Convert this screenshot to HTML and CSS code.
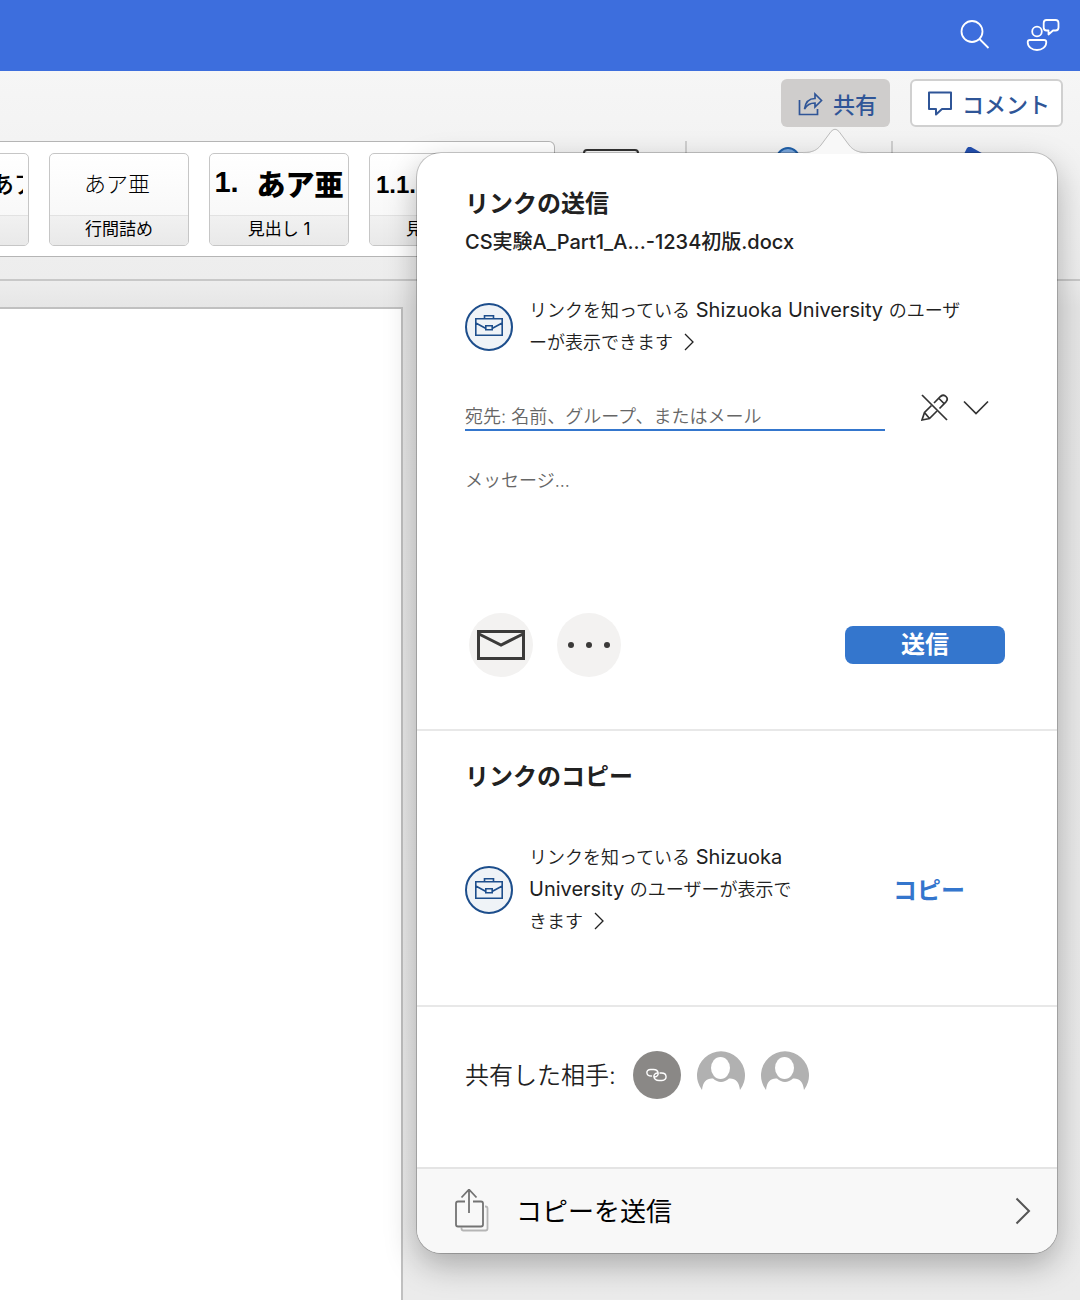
FILE: index.html
```html
<!DOCTYPE html>
<html lang="ja">
<head>
<meta charset="utf-8">
<meta name="viewport" content="width=device-width, initial-scale=1">
<title>リンクの送信</title>
<link rel="stylesheet" href="styles.css">
</head>
<body>
<svg class="symbols" aria-hidden="true">
  <symbol id="briefcase" viewBox="0 0 48 48">
    <circle cx="24" cy="24" r="23" fill="#eff3f7" stroke="#1d4e8c" stroke-width="2"/>
    <path d="M10.800 15.800H37.200V32.200H10.800ZM19.500 15.800V12.700H28.500V15.800M10.800 20L20.500 25.200M37.200 20L27.500 25.200M20.800 22.800H27.200V26.800H20.800Z" fill="none" stroke="#1d4e8c" stroke-width="1.600"/>
  </symbol>
  <symbol id="person" viewBox="0 0 48 48">
    <path d="M5 39A24 24 0 1 1 43 39C42 30 38 27 32 27.500C27 32 21 32 16 27.500C10 27 6 30 5 39Z" fill="#b1b1b1"/>
    <ellipse cx="23.500" cy="17" rx="9.500" ry="11" fill="#fff"/>
  </symbol>
  <symbol id="angle" viewBox="0 0 10 18">
    <path d="M1 1L9 9L1 17" fill="none" stroke="currentColor" stroke-width="1.300"/>
  </symbol>
</svg>

<header class="titlebar">
  <button class="icon-button" type="button" aria-label="検索">
    <svg width="32" height="32" viewBox="0 0 32 32"><g fill="none" stroke="#fff" stroke-width="1.800"><circle cx="13" cy="13.500" r="10.500"/><path d="M20.500 21L29.500 30"/></g></svg>
  </button>
  <button class="icon-button" type="button" aria-label="フィードバック">
    <svg width="34" height="34" viewBox="0 0 34 34"><g fill="none" stroke="#fff" stroke-width="1.800" stroke-linejoin="round"><circle cx="11" cy="14.500" r="4.800"/><path d="M4 23H18Q20.300 23 20.300 25.200C20.300 30 16 33 11 33S1.700 30 1.700 25.200Q1.700 23 4 23Z"/><path d="M20.500 3H29.500Q32.500 3 32.500 6V10.500Q32.500 13.500 29.500 13.500H27L22.500 17.500V13.500H20.500Q17.700 13.500 17.700 10.500V6Q17.700 3 20.500 3Z"/></g></svg>
  </button>
</header>

<section class="ribbon">
  <div class="actions">
    <button class="action pressed" type="button">
      <svg width="25" height="25" viewBox="0 0 25 25"><path d="M1.500 9V23.500H19.500V18M6.500 18C7.500 11 11 7.500 17 7.500V3L23.500 9.500L17 16V12C12 12 9 13.500 6.500 18Z" fill="none" stroke="#2f5597" stroke-width="1.700"/></svg>
      共有
    </button>
    <button class="action outlined" type="button">
      <svg width="25" height="25" viewBox="0 0 25 25"><path d="M2 1.500H24V18H15L9 23.500V18H2Z" fill="none" stroke="#2f5597" stroke-width="2" stroke-linejoin="round"/></svg>
      コメント
    </button>
  </div>
  <div class="groups">
    <div class="gallery">
      <button class="style" type="button"><span class="preview cut">あア</span><span class="name"></span></button>
      <button class="style" type="button"><span class="preview body-style">あア亜</span><span class="name">行間詰め</span></button>
      <button class="style" type="button"><span class="preview heading1"><span>1.</span><span>あア亜</span></span><span class="name">見出し 1</span></button>
      <button class="style" type="button"><span class="preview heading2">1.1. あ</span><span class="name">見出し 2</span></button>
    </div>
    <div class="tools">
      <div class="tool"><svg width="56" height="56" viewBox="0 0 56 56"><rect x="1" y="1" width="54" height="54" rx="3" fill="#f7f7f7" stroke="#333" stroke-width="2"/></svg></div>
      <div class="tool"><svg width="28" height="28" viewBox="0 0 28 28"><circle cx="14" cy="12" r="11" fill="#7ba7dc" stroke="#1f5fa8" stroke-width="2"/></svg></div>
      <div class="tool"><svg width="28" height="28" viewBox="0 0 28 28"><path d="M12 0L28 9L16 28L0 17L8 1Q10-1 12 0Z" fill="#2450b0"/></svg></div>
    </div>
  </div>
</section>

<main class="canvas">
  <div class="paper"></div>
</main>

<div class="popover" role="dialog" aria-labelledby="send-title">
  <svg class="arrow" width="64" height="26" viewBox="0 0 64 26"><path d="M0 25C10 25 14 22 18 17L28 3.500Q32-1 36 3.500L46 17C50 22 54 25 64 25V26H0Z" fill="#f8f8f8"/><path d="M0 24.500C10 24.500 14 22 18 17L28 3.500Q32-1 36 3.500L46 17C50 22 54 24.500 64 24.500" fill="none" stroke="#bbb"/></svg>

  <section class="send">
    <h2 id="send-title">リンクの送信</h2>
    <p class="file">CS実験A_Part1_A...-1234初版.docx</p>
    <a class="scope" href="#permissions">
      <svg class="badge"><use href="#briefcase"/></svg>
      <span class="scope-text">リンクを知っている<span class="latin"> Shizuoka University </span>のユーザーが表示できます <svg class="angle"><use href="#angle"/></svg></span>
    </a>
    <div class="recipient">
      <input type="text" aria-label="宛先" placeholder="宛先: 名前、グループ、またはメール">
      <button class="permission" type="button" aria-label="編集不可">
        <svg width="28" height="28" viewBox="0 0 28 28"><g fill="none" stroke="#333" stroke-width="1.700"><path d="M1 1L26 26"/><path d="M13 9L19.500 2.500Q22.500 0 25 2.500Q27.500 5 25 7.800L18.500 14.500M10.500 11.500L3.500 18.500L1 26L8.500 24.500L16 17M18 4.500L23 9.500M3.500 18.500L8.500 24.500"/></g></svg>
        <svg width="26" height="16" viewBox="0 0 26 16"><path d="M1 1.500L13 13.500L25 1.500" fill="none" stroke="#333" stroke-width="1.700"/></svg>
      </button>
    </div>
    <textarea aria-label="メッセージ" placeholder="メッセージ..."></textarea>
    <div class="send-row">
      <button class="round" type="button" aria-label="メール"><svg width="48" height="30" viewBox="0 0 48 30"><path d="M1.500 1.500H46.500V28.500H1.500ZM2 4L24 15L46 4" fill="none" stroke="#3b3a39" stroke-width="3"/></svg></button>
      <button class="round" type="button" aria-label="その他"><svg width="42" height="6" viewBox="0 0 42 6" fill="#3b3a39"><circle cx="3" cy="3" r="3"/><circle cx="21" cy="3" r="3"/><circle cx="39" cy="3" r="3"/></svg></button>
      <button class="submit" type="button">送信</button>
    </div>
  </section>

  <section class="copy">
    <h2>リンクのコピー</h2>
    <div class="copy-row">
      <a class="scope" href="#permissions">
        <svg class="badge"><use href="#briefcase"/></svg>
        <span class="scope-text">リンクを知っている<span class="latin"> Shizuoka University </span>のユーザーが表示できます <svg class="angle"><use href="#angle"/></svg></span>
      </a>
      <button class="copy-button" type="button">コピー</button>
    </div>
  </section>

  <section class="shared">
    <span>共有した相手:</span>
    <svg width="48" height="48" viewBox="0 0 48 48"><circle cx="24" cy="24" r="24" fill="#8a8886"/><g fill="none" stroke="#fff" stroke-width="1.400" stroke-linecap="round"><path d="M18.500 25C12.500 25 12.500 18.500 17.500 18.500H20.500C26 18.500 27 25.500 21.500 26"/><path d="M27 22H28.500C34.500 22 34.500 29.500 29 29.500H26C20 29.500 19 22.500 24.500 22"/></g></svg>
    <svg width="48" height="48"><use href="#person"/></svg>
    <svg width="48" height="48"><use href="#person"/></svg>
  </section>

  <button class="send-copy" type="button">
    <svg width="34" height="44" viewBox="0 0 34 44"><g fill="none" stroke-width="1.800"><path d="M30 17.500H30.500Q32.500 17.500 32.500 19.500V39.500Q32.500 41.500 30.500 41.500H8.500Q6.500 41.500 6.500 39.500V38.500" stroke="#b5b5b5"/><path d="M10 12.500H3Q1 12.500 1 14.500V35.500Q1 37.500 3 37.500H26Q28 37.500 28 35.500V14.500Q28 12.500 26 12.500H18M14 24V.5M6.500 8.500L14 .5L21.500 8.500" stroke="#737373"/></g></svg>
    <span>コピーを送信</span>
    <svg width="16" height="28" viewBox="0 0 16 28"><path d="M1.500 1.500L14 14L1.500 26.500" fill="none" stroke="#555" stroke-width="2"/></svg>
  </button>
</div>
</body>
</html>
```

FILE: styles.css
```css
* {
  box-sizing: border-box;
}

body {
  position: relative;
  display: flex;
  flex-direction: column;
  min-height: 100vh;
  margin: 0;
  background: #ebebeb;
  color: #212121;
  font-family: Inter, "Noto Sans CJK JP", sans-serif;
  font-size: 18px;
}

button {
  padding: 0;
  border: 0;
  background: none;
  color: inherit;
  font: inherit;
}

svg {
  display: block;
  flex: none;
}

h2,
p {
  margin: 0;
}

.symbols {
  position: absolute;
  width: 0;
  height: 0;
}

/* Title bar */
.titlebar {
  display: flex;
  justify-content: flex-end;
  align-items: center;
  gap: 35px;
  height: 71px;
  padding: 0 20px 3px 0;
  background: #3d6edd;
}

/* Ribbon */
.ribbon {
  height: 210px;
  border-bottom: 2px solid #c8c8c8;
  background: linear-gradient(#f6f6f6, #ededed);
}

.actions {
  display: flex;
  justify-content: flex-end;
  gap: 20px;
  padding: 8px 17px 14px 0;
}

.action {
  display: flex;
  align-items: center;
  gap: 10px;
  height: 48px;
  border-radius: 6px;
  color: #2f5597;
  font-size: 22px;
  font-weight: 500;
}

.pressed {
  padding: 0 13px 0 17px;
  background: #cfcdcc;
}

.outlined {
  padding: 0 11px 0 15px;
  border: 2px solid #d0d0d0;
  background: #fff;
}

.groups {
  display: flex;
}

.gallery {
  display: flex;
  flex: 1;
  gap: 20px;
  height: 116px;
  padding: 11px 0;
  overflow: hidden;
  border: 1px solid #b5b5b5;
  border-left: 0;
  border-radius: 0 6px 6px 0;
  background: #fff;
}

.style {
  display: flex;
  flex: none;
  flex-direction: column;
  width: 140px;
  height: 93px;
  overflow: hidden;
  border: 1px solid #c6c6c6;
  border-radius: 5px;
  background: linear-gradient(#fff, #f5f5f5);
  color: #000;
}

.style:first-child {
  margin-left: -111px;
}

.preview {
  display: flex;
  flex: 1;
  justify-content: center;
  align-items: center;
  width: 100%;
  padding-bottom: 4px;
  font-family: "Liberation Sans", "Noto Sans CJK JP", sans-serif;
  white-space: nowrap;
}

.cut {
  justify-content: flex-start;
  width: 133px;
  padding-left: 100px;
  overflow: hidden;
  font-size: 24px;
  font-weight: 500;
}

.body-style {
  padding: 0 4px 6px 0;
  font-family: "Liberation Serif", "Noto Sans CJK JP", serif;
  font-size: 22px;
  font-weight: 300;
}

.heading1 {
  gap: 18px;
  font-size: 29px;
  font-weight: 900;
}

.heading2 {
  justify-content: flex-start;
  padding-left: 6px;
  font-size: 24px;
  font-weight: 700;
}

.name {
  width: 100%;
  height: 30px;
  border-top: 1px solid #e2e2e2;
  background: linear-gradient(#f1f1f1, #e9e9e9);
  font-size: 17px;
  line-height: 26px;
}

.tools {
  display: grid;
  grid-template-columns: 130px 206px 189px;
  height: 116px;
}

.tool {
  padding: 8px 0 0 28px;
}

.tool + .tool {
  padding: 6px 0 0 87px;
  border-left: 2px solid #cfcfcf;
}

.tool + .tool + .tool {
  padding-left: 66px;
}

/* Document */
.canvas {
  display: flex;
  flex: 1;
  padding: 26px 677px 0 0;
  background: linear-gradient(#ededed, #e6e6e6 26px, #ebebeb);
}

.paper {
  flex: 1;
  border: 2px solid #c0c0c0;
  border-width: 2px 2px 0 0;
  background: #fff;
}

/* Share popover */
.popover {
  position: absolute;
  top: 153px;
  right: 23px;
  width: 640px;
  border-radius: 24px;
  background: #fff;
  box-shadow: 0 0 0 1px rgba(0, 0, 0, 0.2), 0 12px 32px rgba(0, 0, 0, 0.28);
}

.arrow {
  position: absolute;
  top: -25px;
  left: 386px;
}

.popover h2 {
  font-size: 24px;
  font-weight: 700;
  line-height: 32px;
}

.send {
  padding: 35px 52px 52px 48px;
}

.file {
  margin-top: 7px;
  font-size: 20px;
  font-weight: 500;
  line-height: 30px;
}

.scope {
  display: flex;
  align-items: center;
  gap: 16px;
  color: inherit;
  text-decoration: none;
}

.send .scope {
  width: 512px;
  margin-top: 38px;
}

.badge {
  width: 48px;
  height: 48px;
}

.scope-text {
  flex: 1;
  font-weight: 350;
  line-height: 32px;
}

.latin {
  font-size: 20px;
  font-weight: 400;
  line-height: 20px;
}

.angle {
  display: inline-block;
  width: 10px;
  height: 18px;
  margin-left: 6px;
  vertical-align: -2px;
}

.recipient {
  display: flex;
  align-items: flex-start;
  gap: 36px;
  margin-top: 35px;
}

.recipient input {
  width: 420px;
  height: 37px;
  padding: 9px 0 0;
  border: 0;
  border-bottom: 2px solid #3476cd;
  outline: 0;
  background: none;
  font: inherit;
}

.permission {
  display: flex;
  align-items: center;
  gap: 14px;
}

::placeholder {
  color: #666;
  font-weight: 350;
  opacity: 1;
}

textarea {
  display: block;
  width: 100%;
  height: 148px;
  margin-top: 34px;
  padding: 0;
  border: 0;
  outline: 0;
  background: none;
  resize: none;
  font: inherit;
  line-height: 32px;
}

.send-row {
  display: flex;
  align-items: center;
  gap: 24px;
  padding-left: 4px;
}

.round {
  display: grid;
  place-items: center;
  width: 64px;
  height: 64px;
  border-radius: 50%;
  background: #f3f2f1;
}

.submit {
  width: 160px;
  height: 38px;
  margin-left: auto;
  border-radius: 8px;
  background: #3476cd;
  color: #fff;
  font-size: 24px;
  font-weight: 700;
  line-height: 38px;
}

.copy {
  padding: 30px 48px 67px;
  border-top: 2px solid #e8e8e8;
}

.copy-row {
  display: flex;
  align-items: center;
  margin-top: 49px;
}

.copy .scope {
  width: 336px;
}

.copy-button {
  margin-left: 92px;
  padding-bottom: 4px;
  color: #3476cd;
  font-size: 24px;
  font-weight: 700;
}

.shared {
  display: flex;
  align-items: center;
  gap: 16px;
  padding: 44px 48px 68px;
  border-top: 2px solid #e8e8e8;
  font-size: 24px;
  font-weight: 350;
}

.shared span {
  padding: 0 1px 4px 0;
}

.send-copy {
  display: flex;
  align-items: center;
  width: 100%;
  height: 86px;
  padding: 0 26px 0 38px;
  border-top: 2px solid #e4e4e4;
  border-radius: 0 0 24px 24px;
  background: #f8f8f8;
  color: #000;
  font-size: 26px;
}

.send-copy span {
  flex: 1;
  padding: 0 0 4px 27px;
  text-align: left;
}
```
